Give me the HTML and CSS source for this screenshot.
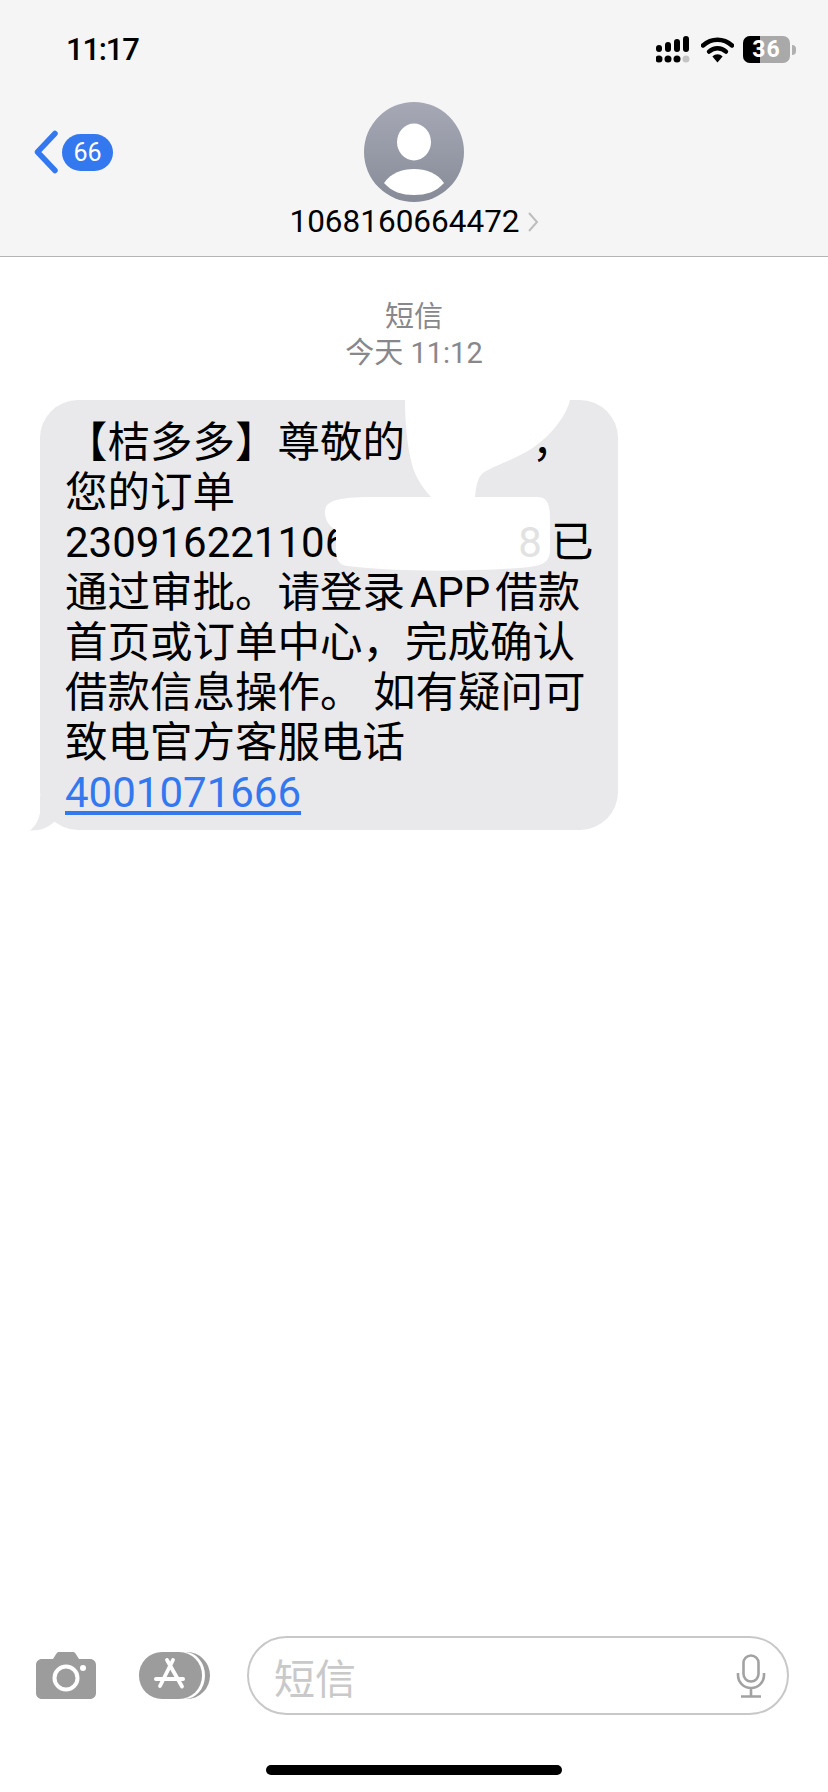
FILE: index.html
```html
<!DOCTYPE html>
<html lang="zh-CN">
<head>
    <meta charset="UTF-8">
    <meta name="viewport" content="width=device-width, initial-scale=1.0">
    <title>短信</title>
    <link rel="stylesheet" href="styles.css">
</head>
<body>
    <header class="top">
        <div class="status">
            <span class="time">11:17</span>
            <div class="status-icons">
                <svg class="signal" width="34" height="27" viewBox="0 0 34 27">
                    <rect x="0" y="9" width="6" height="7" rx="3"/>
                    <rect x="9" y="6" width="6" height="10" rx="3"/>
                    <rect x="18" y="3" width="6" height="13" rx="3"/>
                    <rect x="27" y="0" width="6" height="16" rx="3"/>
                    <circle cx="3" cy="23" r="3.5"/>
                    <circle cx="12" cy="23" r="3.5"/>
                    <circle cx="21" cy="23" r="3.5"/>
                    <circle cx="30" cy="23" r="3.5" fill="#c4c4c4"/>
                </svg>
                <svg class="wifi" width="33" height="26" viewBox="0 0 33 26">
                    <path d="M2 8.5C10.5 .8 22.5 .8 31 8.5" fill="none" stroke="#000" stroke-width="4.4" stroke-linecap="round"/>
                    <path d="M8 14.6C13 10.2 20 10.2 25 14.6" fill="none" stroke="#000" stroke-width="4.4" stroke-linecap="round"/>
                    <path d="M11.4 19.6C14.5 16.6 18.5 16.6 21.6 19.6L16.5 25.6Z"/>
                </svg>
                <div class="battery">
                    <span class="battery-fill"></span>
                    <span class="battery-num">36</span>
                </div>
                <span class="battery-tip"></span>
            </div>
        </div>
        <div class="nav">
            <div class="back">
                <svg width="26" height="44" viewBox="0 0 26 44">
                    <path d="M22 3.500L4.500 22L22 40.500" fill="none" stroke="#3478f0" stroke-width="5.500" stroke-linecap="round" stroke-linejoin="round"/>
                </svg>
                <span class="badge">66</span>
            </div>
            <div class="contact">
                <svg class="avatar" width="100" height="100" viewBox="0 0 100 100">
                    <defs>
                        <linearGradient id="avatarBg" x1="0" y1="0" x2="0" y2="1">
                            <stop offset="0" stop-color="#a6a9b5"/>
                            <stop offset="1" stop-color="#878b98"/>
                        </linearGradient>
                    </defs>
                    <circle cx="50" cy="50" r="50" fill="url(#avatarBg)"/>
                    <ellipse cx="50" cy="40" rx="17" ry="18.500" fill="#fff"/>
                    <path d="M20 81C27 71 38 67 50 67C62 67 73 71 80 81C72 90 62 93 50 93C38 93 28 90 20 81Z" fill="#fff"/>
                </svg>
                <div class="contact-name">
                    <span>1068160664472</span>
                    <svg width="12" height="22" viewBox="0 0 12 22">
                        <path d="M2 2L10 11L2 20" fill="none" stroke="#bdbdbd" stroke-width="2"/>
                    </svg>
                </div>
            </div>
        </div>
    </header>

    <main class="thread">
        <div class="stamp">
            <div class="stamp-kind">短信</div>
            <div class="stamp-time">今天 11:12</div>
        </div>
        <div class="bubble">
            <svg class="tail" width="30" height="35" viewBox="0 0 30 35">
                <path d="M10 0V17Q8 28 0 34.500Q14 35 23 27L30 20V0Z" fill="#e9e9eb"/>
            </svg>
            <div class="msg">
                <span class="line">【桔多多】尊敬的<span class="gap-name"></span>，</span>
                <span class="line">您的订单</span>
                <span class="line"><span class="num">230916221106</span><span class="gap-order"></span><span class="num faint">8</span>已</span>
                <span class="line">通过审批。请登录<span class="thin">&#8201;</span><span class="num">APP</span><span class="thin">&#8201;</span>借款</span>
                <span class="line">首页或订单中心，完成确认</span>
                <span class="line">借款信息操作。 如有疑问可</span>
                <span class="line">致电官方客服电话</span>
                <span class="line"><a class="phone num" href="#">4001071666</a></span>
            </div>
            <svg class="smudge" width="270" height="175" viewBox="0 0 270 175">
                <path d="M100 0H265C262 13 250 32 229 47C210 60 190 65 178 73C172 78 171 88 170 97H232C243 97 245 105 245 120V150C245 160 240 165 225 167C170 172 90 172 42 166C33 165 31 158 31 150V130C24 126 20 120 20 112C20 102 28 98 60 97H126C115 85 108 72 106 60C102 45 100 20 100 0Z" fill="#fff"/>
            </svg>
        </div>
    </main>

    <footer class="composer">
        <svg class="ico-camera" width="60" height="47" viewBox="0 0 60 47">
            <path d="M6 7H17L20.500 1.500C21 .7 22 0 23 0H37C38 0 39 .7 39.500 1.500L43 7H54C57.500 7 60 9.500 60 13V41C60 44.500 57.500 47 54 47H6C2.500 47 0 44.500 0 41V13C0 9.500 2.500 7 6 7Z" fill="#9c9c9c"/>
            <circle cx="30" cy="26" r="11.500" fill="none" stroke="#fff" stroke-width="4"/>
            <circle cx="47" cy="16" r="3" fill="#fff"/>
        </svg>
        <svg class="ico-apps" width="74" height="47" viewBox="0 0 74 47">
            <ellipse cx="48" cy="23.500" rx="23" ry="23.500" fill="#9c9c9c"/>
            <ellipse cx="46" cy="23.500" rx="20" ry="23.500" fill="#fff"/>
            <rect x="0" y="0" width="63" height="47" rx="23" fill="#9c9c9c"/>
            <path d="M34 8L21 34M28 8L43 34.500" fill="none" stroke="#fff" stroke-width="3.800" stroke-linecap="round"/>
            <path d="M17 27H44" fill="none" stroke="#fff" stroke-width="4" stroke-linecap="round"/>
        </svg>
        <div class="input">
            <span class="placeholder">短信</span>
            <svg class="ico-mic" width="30" height="44" viewBox="0 0 30 44">
                <rect x="7.500" y="1.500" width="15" height="26" rx="7.500" fill="none" stroke="#a2a2a2" stroke-width="2.600"/>
                <path d="M2 19V21C2 28.500 8 34 15 34C22 34 28 28.500 28 21V19M15 34V42M5 42.500H25" fill="none" stroke="#a2a2a2" stroke-width="2.600"/>
            </svg>
        </div>
    </footer>
    <div class="home-row"><span class="home-bar"></span></div>
</body>
</html>
```

FILE: styles.css
```css
* {
    box-sizing: border-box;
}
body {
    margin: 0;
    width: 828px;
    height: 1792px;
    display: flex;
    flex-direction: column;
    background: #fff;
    color: #000;
    font-family: Roboto, "Noto Sans CJK SC", sans-serif;
    overflow: hidden;
}
.top {
    height: 257px;
    background: #f5f5f5;
    border-bottom: 1px solid #b4b4b4;
}
.status {
    height: 102px;
    padding: 30px 32px 0 66px;
    display: flex;
    justify-content: space-between;
    align-items: flex-start;
}
.time {
    font-size: 31px;
    line-height: 40px;
    font-weight: 500;
    letter-spacing: -1.2px;
}
.status-icons {
    display: flex;
    align-items: center;
    padding-top: 6px;
}
.signal {
    margin-right: 11px;
}
.wifi {
    margin-right: 9px;
}
.battery {
    position: relative;
    width: 47px;
    height: 27px;
    border-radius: 7px;
    background: #a9a9a9;
    overflow: hidden;
}
.battery-fill {
    display: block;
    width: 17px;
    height: 100%;
    background: #000;
}
.battery-num {
    position: absolute;
    inset: 0;
    text-align: center;
    color: #fff;
    font-size: 23px;
    line-height: 27px;
    font-weight: 700;
    letter-spacing: 1px;
}
.battery-tip {
    width: 4px;
    height: 10px;
    margin-left: 2px;
    background: #b0b0b0;
    border-radius: 0 5px 5px 0;
}
.nav {
    display: grid;
    grid-template-columns: 1fr auto 1fr;
}
.back {
    display: flex;
    align-items: center;
    align-self: start;
    gap: 3px;
    padding: 28px 0 0 33px;
}
.badge {
    width: 51px;
    height: 37px;
    border-radius: 19px;
    background: #3478f0;
    color: #fff;
    text-align: center;
    font-size: 25px;
    line-height: 37px;
}
.contact {
    display: flex;
    flex-direction: column;
    align-items: center;
}
.avatar {
    display: block;
}
.contact-name {
    display: flex;
    align-items: center;
    gap: 7px;
    font-size: 31.5px;
    line-height: 40px;
}
.thread {
    flex: 1;
    padding-top: 43px;
}
.stamp {
    text-align: center;
    color: #88888c;
}
.stamp-kind {
    font-size: 29px;
    line-height: 34px;
}
.stamp-time {
    font-size: 29px;
    line-height: 42px;
    margin-top: -2px;
}
.bubble {
    position: relative;
    width: 578px;
    height: 430px;
    margin: 26px 0 0 40px;
    padding: 18px 0 0 25px;
    border-radius: 38px;
    background: #e9e9eb;
}
.tail {
    position: absolute;
    left: -10px;
    bottom: -1px;
}
.msg {
    font-size: 42.5px;
    white-space: nowrap;
}
.line {
    display: block;
    height: 50px;
    line-height: 50px;
}
.num {
    font-size: 42px;
}
.gap-name {
    display: inline-block;
    width: 127px;
}
.gap-order {
    display: inline-block;
    width: 170px;
}
.faint {
    position: relative;
    z-index: 1;
    margin-right: 9px;
    color: #e2e2e2;
}
.thin {
    font-size: 24px;
}
.phone {
    color: #3478f0;
    text-decoration: underline;
    text-underline-offset: 4px;
}
.smudge {
    position: absolute;
    left: 265px;
    top: 0;
}
.composer {
    display: flex;
    align-items: center;
    height: 79px;
    margin-bottom: 50px;
    padding-left: 36px;
}
.ico-camera {
    margin-right: 43px;
}
.ico-apps {
    margin-right: 34px;
}
.input {
    width: 542px;
    height: 79px;
    display: flex;
    justify-content: space-between;
    align-items: center;
    padding: 0 21px 0 25px;
    border: 2px solid #c8c8c8;
    border-radius: 40px;
}
.placeholder {
    font-size: 41px;
    color: #c9c9c9;
}
.home-row {
    height: 27px;
    display: flex;
    justify-content: center;
}
.home-bar {
    width: 296px;
    height: 10px;
    border-radius: 5px;
    background: #000;
}
```
